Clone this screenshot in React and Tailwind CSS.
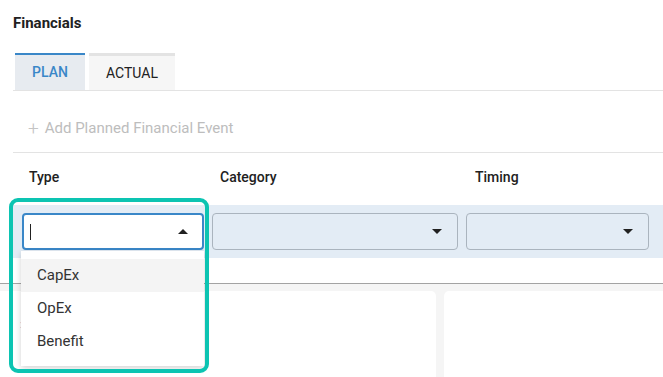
import React from "react";

function Caret({ up }) {
  return (
    <svg width="10" height="5" viewBox="0 0 10 5" className="shrink-0">
      {up ? <path d="M0 5 L5 0 L10 5 Z" fill="#212121" /> : <path d="M0 0 L5 5 L10 0 Z" fill="#212121" />}
    </svg>
  );
}

export default function App() {
  const options = ["CapEx", "OpEx", "Benefit"];
  return (
    <div className="relative w-[663px] h-[377px] overflow-hidden bg-white font-['Roboto','Liberation_Sans',sans-serif] text-[#212121]">
      <div className="pt-[13px] pl-[13px] text-[15px] font-bold leading-[20px]">Financials</div>

      <div className="mt-[20px] ml-[13px] flex border-b border-[#e3e3e3]">
        <div className="ml-[2px] w-[70px] h-[37px] flex items-center justify-center border-t-2 border-[#3a87c8] bg-[#e7ebf0] text-[14px] font-medium text-[#3a87c8]">
          PLAN
        </div>
        <div className="ml-[4px] w-[86px] h-[37px] flex items-center justify-center border-t-[3px] border-[#e3e3e3] bg-[#f6f6f6] text-[14px] text-[#212121]">
          ACTUAL
        </div>
      </div>

      <div className="ml-[13px] h-[62px] pt-[14px] pl-[15px] flex items-center gap-[6px] border-b border-[#e3e3e3] text-[15px] text-[#bdbdbd]">
        <span className="text-[19px] leading-none font-light text-[#c4c4c4]">+</span>
        <span>Add Planned Financial Event</span>
      </div>

      <div className="ml-[13px] h-[52px] pb-[4px] grid grid-cols-[182px_246px_183px] gap-x-[8px] pl-[9px] items-center text-[14px] font-medium">
        <span className="pl-[7px]">Type</span>
        <span className="pl-[8px]">Category</span>
        <span className="pl-[9px]">Timing</span>
      </div>

      <div className="ml-[13px] h-[53px] bg-[#e3ecf5] grid grid-cols-[182px_246px_183px] gap-x-[8px] pl-[9px] items-center">
        <div className="h-[37px] rounded-[4px] border-2 border-[#3a87c8] bg-white flex items-center justify-between pl-[6px] pr-[14px]">
          <span className="w-px h-[16px] bg-[#212121]" />
          <Caret up />
        </div>
        <div className="h-[37px] rounded-[4px] border border-[#aab4be] flex items-center justify-end pr-[15px]">
          <Caret />
        </div>
        <div className="h-[37px] rounded-[4px] border border-[#aab4be] flex items-center justify-end pr-[15px]">
          <Caret />
        </div>
      </div>

      <div className="h-[25px]" />
      <div className="border-t border-[#a3a3a3] bg-[#f5f5f5] pt-[7px] h-[100px] flex gap-[8px]">
        <div className="w-[436px] bg-white rounded-tr-[5px] pl-[20px] pt-[20px]">
          <span className="text-[10px] text-[#3a87c8]">:</span>
        </div>
        <div className="flex-1 bg-white rounded-tl-[5px] flex flex-col justify-end">
          <div className="ml-[18px] border-b border-[#e6e8f0]" />
        </div>
      </div>

      <div className="absolute left-[21px] top-[251px] w-[183px] bg-white shadow-[0_2px_6px_rgba(0,0,0,0.18)] pt-[8px] pb-[8px] text-[15px] text-[#333333]">
        {options.map((o, i) => (
          <div key={o} className={"h-[33px] flex items-center pl-[16px] " + (i === 0 ? "bg-[#f4f4f4]" : "")}>
            {o}
          </div>
        ))}
      </div>

      <div className="absolute left-[9px] top-[198px] w-[200px] h-[175px] rounded-[9px] border-[4px] border-[#0cc4b2] pointer-events-none" />
    </div>
  );
}
